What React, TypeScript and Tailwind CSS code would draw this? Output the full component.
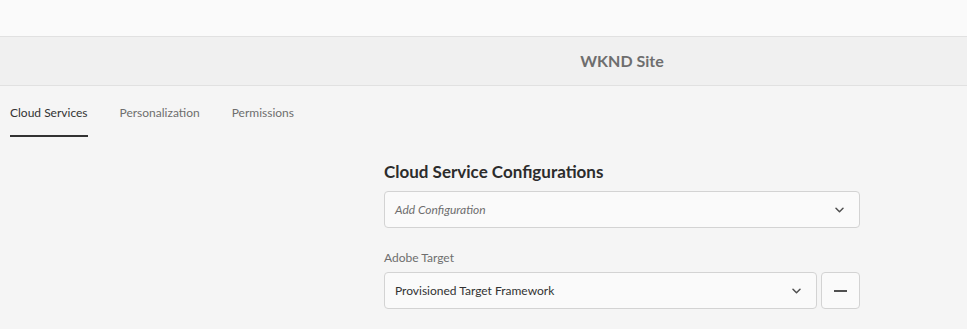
import React from "react";

const Chevron = () => (
  <svg width="9" height="6" viewBox="0 0 9 6" fill="none">
    <path d="M1 1.2l3.5 3.5 3.5-3.5" stroke="#505050" strokeWidth="1.5" strokeLinecap="round" strokeLinejoin="round" />
  </svg>
);

export default function App() {
  return (
    <div className="w-[967px] h-[329px] overflow-hidden bg-[#f5f5f5] text-[#323232]" style={{ fontFamily: "Lato, 'Open Sans', sans-serif" }}>
      <div className="h-[37px] bg-[#fafafa] border-b border-[#e1e1e1]" />
      <div className="h-[49px] bg-[#f0f0f0] border-b border-[#e1e1e1] flex items-center justify-center pl-[277px]">
        <span className="text-[16px] font-bold text-[#6e6e6e]">WKND Site</span>
      </div>
      <div className="flex gap-8 pl-[10px] h-[51px]">
        <div className="flex flex-col justify-between pt-[19px]">
          <span className="text-[12px] leading-[16px] text-[#323232]">Cloud Services</span>
          <div className="h-[2px] bg-[#323232]" />
        </div>
        <div className="pt-[19px] text-[12px] leading-[16px] text-[#6e6e6e]">Personalization</div>
        <div className="pt-[19px] text-[12px] leading-[16px] text-[#6e6e6e]">Permissions</div>
      </div>
      <div className="ml-[384px] w-[476px] pt-[24px]">
        <div className="text-[17px] font-bold text-[#2c2c2c] leading-[22px]">Cloud Service Configurations</div>
        <div className="mt-[8px] h-[37px] rounded-[4px] border border-[#d3d3d3] bg-[#fafafa] flex items-center justify-between pl-[10px] pr-[15px]">
          <span className="text-[12px] italic text-[#6e6e6e]">Add Configuration</span>
          <Chevron />
        </div>
        <div className="mt-[22px] text-[12px] text-[#6e6e6e] leading-[16px]">Adobe Target</div>
        <div className="mt-[6px] flex gap-[4px]">
          <div className="flex-1 h-[37px] rounded-[4px] border border-[#d3d3d3] bg-[#fafafa] flex items-center justify-between pl-[10px] pr-[15px]">
            <span className="text-[12px] text-[#323232]">Provisioned Target Framework</span>
            <Chevron />
          </div>
          <div className="w-[39px] h-[37px] rounded-[4px] border border-[#d3d3d3] bg-[#fafafa] flex items-center justify-center">
            <div className="w-[13px] h-[2px] bg-[#505050]" />
          </div>
        </div>
      </div>
    </div>
  );
}
